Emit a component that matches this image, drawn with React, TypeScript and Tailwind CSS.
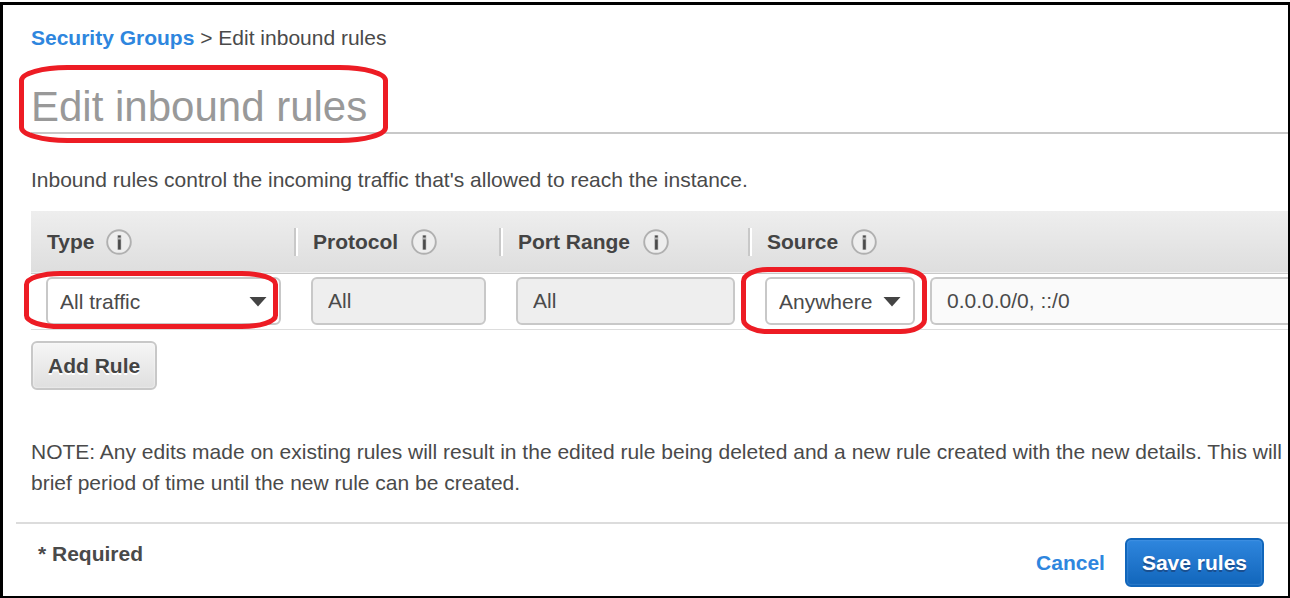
import type { ReactNode } from "react";

const control =
  "h-12 rounded-md border-2 border-[#c8c8c8] text-[21px] leading-[31px] text-[#4a4a4a]";

function InfoIcon({ topic }: { topic: string }) {
  return (
    <button type="button" aria-label={`About ${topic}`} className="shrink-0">
      <svg width="26" height="26" viewBox="0 0 26 26" className="block">
        <circle cx="13" cy="13" r="11.8" fill="#eee" stroke="#b0b0b0" strokeWidth="1.9" />
        <path d="M11.3 6.2h4v14.6h-4z" fill="#b4b4b4" />
        <path d="M13.4 6.4v2.2M13.4 10.6v9.8" stroke="#4a4a4a" strokeWidth="2.6" fill="none" />
      </svg>
    </button>
  );
}

function HeaderCell({ label, first, className = "" }: { label: string; first?: boolean; className?: string }) {
  return (
    <th scope="col" className={`h-[62px] p-0 text-left align-middle font-bold ${className}`}>
      <div className="flex items-center">
        {first ? null : <span className="h-7 w-1 shrink-0 border-l-2 border-[#c8c8c8] bg-white" />}
        <span className={`whitespace-nowrap ${first ? "ml-4 mr-3" : "ml-[15px] mr-[13px]"}`}>{label}</span>
        <InfoIcon topic={label} />
      </div>
    </th>
  );
}

function Marker({ width, height, rx, ry, className }: { width: number; height: number; rx: number; ry: number; className: string }) {
  const l = 2.5;
  const t = 2.5;
  const r = width - 2.5;
  const b = height - 2.5;
  const kx = rx * 0.45;
  const ky = ry * 0.45;
  const d = [
    `M${l} ${t + ry}`,
    `C${l} ${t + ky} ${l + kx} ${t} ${l + rx} ${t}`,
    `H${r - rx}`,
    `C${r - kx} ${t} ${r} ${t + ky} ${r} ${t + ry}`,
    `V${b - ry}`,
    `C${r} ${b - ky} ${r - kx} ${b} ${r - rx} ${b}`,
    `H${l + rx}`,
    `C${l + kx} ${b} ${l} ${b - ky} ${l} ${b - ry}`,
    "Z",
  ].join(" ");
  return (
    <svg
      aria-hidden="true"
      width={width}
      height={height}
      className={`pointer-events-none absolute z-10 max-w-none ${className}`}
    >
      <path d={d} fill="none" stroke="#ed1c24" strokeWidth="5" />
    </svg>
  );
}

function SelectBox({
  label,
  options,
  className,
  children,
}: {
  label: string;
  options: string[];
  className: string;
  children: ReactNode;
}) {
  return (
    <div className={`relative ${className}`}>
      <select aria-label={label} className={`${control} block w-full appearance-none bg-white pl-3`}>
        {options.map((o) => (
          <option key={o}>{o}</option>
        ))}
      </select>
      <svg
        aria-hidden="true"
        width="18"
        height="10"
        viewBox="0 0 18 10"
        className="pointer-events-none absolute top-5 right-[14px]"
      >
        <path d="M0.5 0H17.5L9 9.6Z" fill="#444" />
      </svg>
      {children}
    </div>
  );
}

export default function App() {
  return (
    <div className="flex min-h-screen flex-col bg-white pt-0.5 font-['Liberation_Sans',Arial,sans-serif] text-[21px] leading-[31px] text-[#4a4a4a]">
      <main className="flex grow flex-col overflow-hidden border-2 border-t-3 border-l-3 border-black">
        <div className="pt-[17px] pl-7">
          <nav aria-label="Breadcrumb">
            <a href="#security-groups" className="font-bold text-[#2e86de]">
              Security Groups
            </a>{" "}
            &gt; Edit inbound rules
          </nav>

          <div className="relative mt-7 border-b-2 border-[#c8c8c8]">
            <h1 className="h-[51px] text-[42px] leading-[52px] text-[#999]">Edit inbound rules</h1>
            <Marker width={369} height={78} rx={46} ry={13} className="-top-4 -left-3" />
          </div>

          <p className="mt-[30px] mb-4">
            Inbound rules control the incoming traffic that's allowed to reach the instance.
          </p>

          <table className="w-full table-fixed border-collapse">
            <thead>
              <tr className="border-b border-[#c8c8c8] bg-linear-to-b from-[#eee] to-[#dedede] text-[#444]">
                <HeaderCell label="Type" first className="w-[263px]" />
                <HeaderCell label="Protocol" className="w-[205px]" />
                <HeaderCell label="Port Range" className="w-[249px]" />
                <HeaderCell label="Source" />
              </tr>
            </thead>
            <tbody>
              <tr className="border-b border-[#ddd]">
                <td className="h-[56px] py-0 pr-[13px] pl-[15px]">
                  <SelectBox
                    label="Type"
                    options={["All traffic", "Custom TCP Rule", "SSH", "HTTP"]}
                    className="w-full"
                  >
                    <Marker width={254} height={58} rx={34} ry={11} className="-top-[6px] -left-[22px]" />
                  </SelectBox>
                </td>
                <td className="py-0 pr-[13px] pl-[17px]">
                  <input aria-label="Protocol" disabled defaultValue="All" className={`${control} block w-full bg-[#eee] px-[15px]`} />
                </td>
                <td className="py-0 pr-[13px] pl-[17px]">
                  <input aria-label="Port Range" disabled defaultValue="All" className={`${control} block w-full bg-[#eee] px-[15px]`} />
                </td>
                <td className="py-0 pr-0 pl-[17px]">
                  <div className="flex gap-[15px]">
                    <SelectBox
                      label="Source"
                      options={["Anywhere", "Custom", "My IP"]}
                      className="w-[150px] shrink-0"
                    >
                      <Marker width={186} height={67} rx={24} ry={12} className="-top-[10px] -left-6" />
                    </SelectBox>
                    <input
                      aria-label="Source addresses"
                      readOnly
                      defaultValue="0.0.0.0/0, ::/0"
                      className={`${control} min-w-0 flex-1 rounded-r-none border-r-0 bg-[#fafafa] px-[15px]`}
                    />
                  </div>
                </td>
              </tr>
            </tbody>
          </table>

          <button
            type="button"
            className="mt-[11px] block h-[49px] rounded-md border-2 border-[#c8c8c8] bg-linear-to-b from-[#f6f6f6] to-[#dfdfdf] px-[15px] font-bold text-[#444] inset-shadow-[0_0_2px_#fff] text-shadow-[0_2px_0_#fff]"
          >
            Add Rule
          </button>

          <p className="mt-[46px] whitespace-nowrap">
            NOTE: Any edits made on existing rules will result in the edited rule being deleted and a new rule created with the new details. This will
            <br />
            brief period of time until the new rule can be created.
          </p>
        </div>

        <footer className="mt-6 ml-[13px] flex items-start justify-between border-t-2 border-[#dcdcdc] pt-[14px] pr-6 pb-[9px] pl-[22px] font-bold">
          <p>* Required</p>
          <div className="flex items-center gap-5">
            <a href="#cancel" className="text-[#2e86de]">
              Cancel
            </a>
            <button
              type="button"
              className="h-[49px] rounded-md border-2 border-[#1166bb] bg-linear-to-b from-[#2e86de] to-[#1166bb] px-[15px] text-white inset-shadow-[0_0_2px_#62a4e6] text-shadow-[0_2px_0_#1a4f8f]"
            >
              Save rules
            </button>
          </div>
        </footer>
      </main>
    </div>
  );
}
